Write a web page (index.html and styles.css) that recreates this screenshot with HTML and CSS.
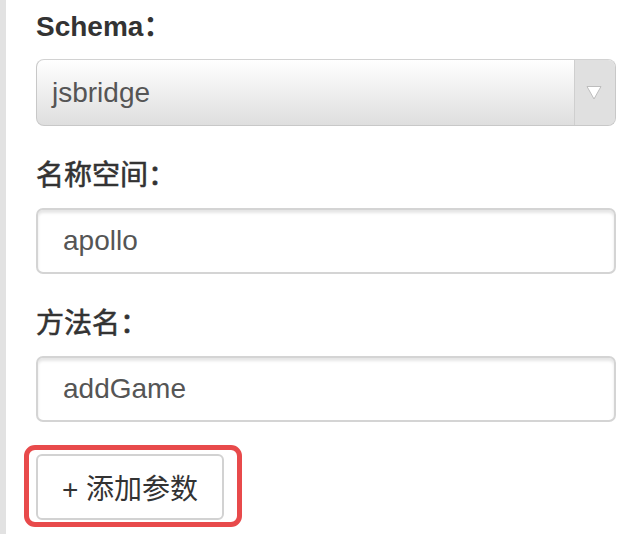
FILE: index.html
```html
<!DOCTYPE html>
<html lang="zh">
<head>
<meta charset="utf-8">
<title>Form</title>
<link rel="stylesheet" href="styles.css">
</head>
<body>
<div class="strip"></div>
<main class="form">
  <div class="group">
    <label class="label">Schema：</label>
    <div class="select">
      <span class="select-value">jsbridge</span>
      <span class="select-arrow">
        <svg width="16" height="15" viewBox="0 0 16 15"><path d="M1 1.5 L15 1.5 L8 14 Z" fill="#ffffff" stroke="#bdbdbd" stroke-width="1"/></svg>
      </span>
    </div>
  </div>
  <div class="group">
    <label class="label cjk">名称空间：</label>
    <div class="input">apollo</div>
  </div>
  <div class="group">
    <label class="label cjk">方法名：</label>
    <div class="input">addGame</div>
  </div>
  <div class="actions">
    <button class="btn">+ 添加参数</button>
    <div class="highlight"></div>
  </div>
</main>
</body>
</html>
```

FILE: styles.css
```css
* { box-sizing: border-box; }
html, body { margin: 0; padding: 0; background: #ffffff; }
body {
  display: flex;
  width: 640px;
  height: 534px;
  overflow: hidden;
  font-family: "Liberation Sans", Arial, "Noto Sans CJK SC", sans-serif;
  color: #333333;
}
.strip {
  width: 6px;
  flex: none;
  background: #e2e2e2;
}
.form {
  padding: 10px 0 0 30px;
  width: 610px;
}
.group { margin-bottom: 33px; }
.label {
  display: block;
  font-size: 28px;
  line-height: 34px;
  font-weight: 700;
  margin-bottom: 15px;
  color: #333333;
}
.label.cjk {
  font-weight: 400;
  -webkit-text-stroke: 0.6px #333333;
}
.select {
  display: flex;
  width: 580px;
  height: 67px;
  border: 1px solid #c8c8c8;
  border-top-color: #d2d2d2;
  border-radius: 8px;
  background: linear-gradient(#ffffff, #dedede);
  overflow: hidden;
}
.select-value {
  flex: 1;
  padding-left: 15px;
  font-size: 28px;
  line-height: 65px;
  color: #555555;
}
.select-arrow {
  width: 41px;
  display: flex;
  align-items: center;
  justify-content: center;
  padding-right: 3px;
  background: #e0e0e0;
  border-left: 1px solid #cfcfcf;
}
.input {
  width: 580px;
  height: 66px;
  border: 2px solid #d4d4d4;
  border-radius: 7px;
  box-shadow: inset 0 3px 3px rgba(0,0,0,0.10);
  padding-left: 25px;
  font-size: 28px;
  line-height: 62px;
  color: #555555;
}
.actions {
  position: relative;
  margin-top: -1px;
}
.btn {
  display: block;
  width: 188px;
  height: 66px;
  background: #ffffff;
  border: 2px solid #d2d2d2;
  border-radius: 6px;
  font-family: "Liberation Sans", Arial, "Noto Sans CJK SC", sans-serif;
  font-size: 28px;
  color: #333333;
  padding: 0;
}
.highlight {
  position: absolute;
  left: -12px;
  top: -9px;
  width: 218px;
  height: 82px;
  border: 5px solid #e84a4b;
  border-radius: 11px;
}
```
